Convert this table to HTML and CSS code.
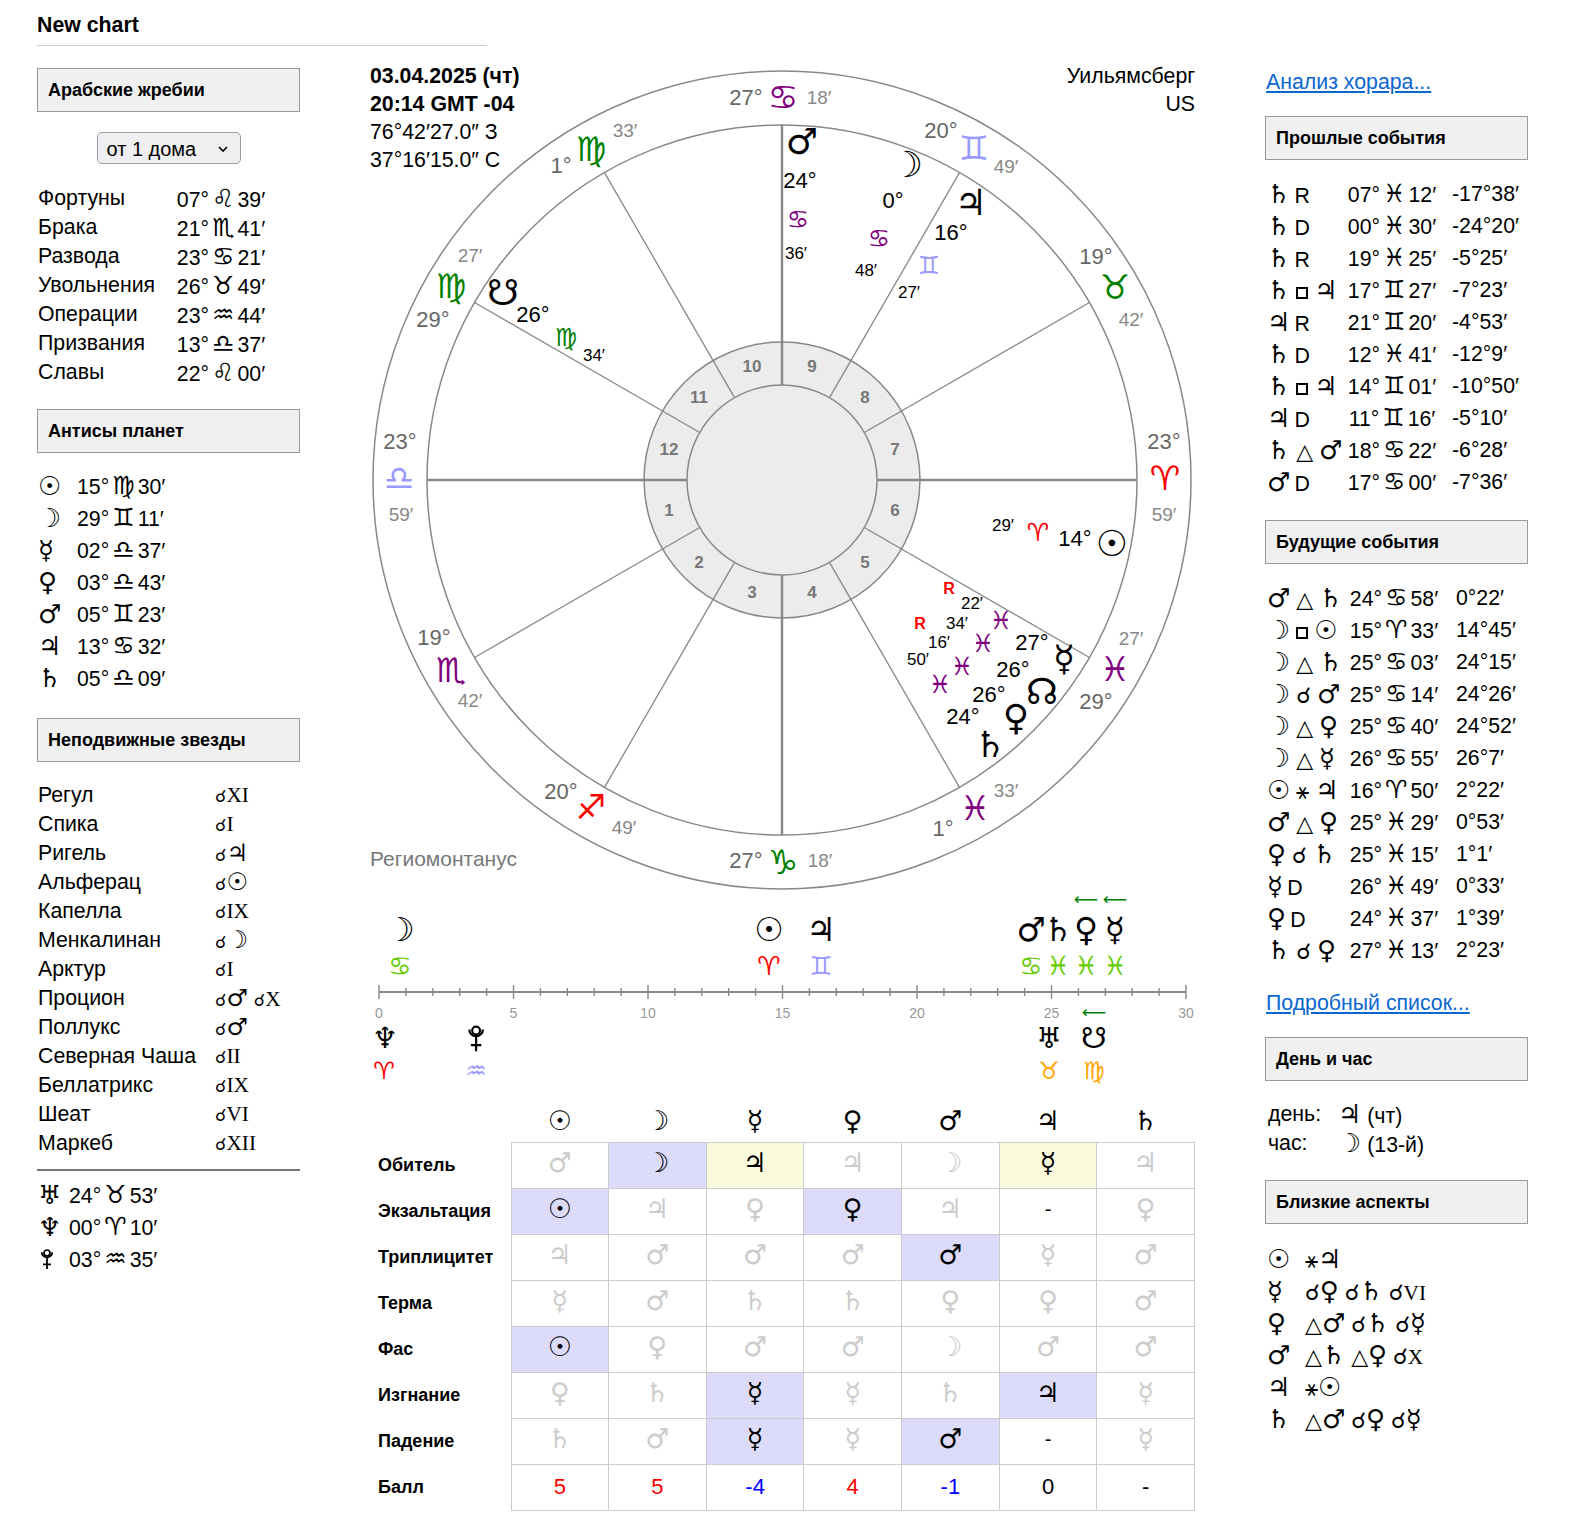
FILE: index.html
```html
<!DOCTYPE html>
<html lang="ru">
<head>
<meta charset="utf-8">
<title>New chart</title>
<link rel="stylesheet" href="styles.css">
</head>
<body>
<div class="page">
  <h1 class="title">New chart</h1>
  <div class="columns">
    <aside class="side left">
      <div class="box first">Арабские жребии</div>
      <div class="select"><span>от 1 дома</span><svg class="chev" width="12" height="8" viewBox="0 0 12 8"><path d="M2 2L6 6L10 2" fill="none" stroke="#000" stroke-width="1.6"/></svg></div>
      <div class="lots">
        <span>Фортуны</span><span class="v">07°<span class="z">♌&#xFE0E;</span>39′</span>
        <span>Брака</span><span class="v">21°<span class="z">♏&#xFE0E;</span>41′</span>
        <span>Развода</span><span class="v">23°<span class="z">♋&#xFE0E;</span>21′</span>
        <span>Увольнения</span><span class="v">26°<span class="z">♉&#xFE0E;</span>49′</span>
        <span>Операции</span><span class="v">23°<span class="z">♒&#xFE0E;</span>44′</span>
        <span>Призвания</span><span class="v">13°<span class="z">♎&#xFE0E;</span>37′</span>
        <span>Славы</span><span class="v">22°<span class="z">♌&#xFE0E;</span>00′</span>
      </div>
      <div class="box gap">Антисы планет</div>
      <div class="antis">
        <span class="g">☉</span><span>15°<span class="z">♍&#xFE0E;</span>30′</span>
        <span class="g">☽</span><span>29°<span class="z">♊&#xFE0E;</span>11′</span>
        <span class="g">☿</span><span>02°<span class="z">♎&#xFE0E;</span>37′</span>
        <span class="g">♀</span><span>03°<span class="z">♎&#xFE0E;</span>43′</span>
        <span class="g">♂</span><span>05°<span class="z">♊&#xFE0E;</span>23′</span>
        <span class="g">♃</span><span>13°<span class="z">♋&#xFE0E;</span>32′</span>
        <span class="g">♄</span><span>05°<span class="z">♎&#xFE0E;</span>09′</span>
      </div>
      <div class="box gap2">Неподвижные звезды</div>
      <div class="stars">
        <span>Регул</span><span><span class="cj">☌</span><span class="rn">XI</span></span>
        <span>Спика</span><span><span class="cj">☌</span><span class="rn">I</span></span>
        <span>Ригель</span><span><span class="cj">☌</span><span class="g">♃</span></span>
        <span>Альферац</span><span><span class="cj">☌</span><span class="g">☉</span></span>
        <span>Капелла</span><span><span class="cj">☌</span><span class="rn">IX</span></span>
        <span>Менкалинан</span><span><span class="cj">☌</span><span class="g">☽</span></span>
        <span>Арктур</span><span><span class="cj">☌</span><span class="rn">I</span></span>
        <span>Процион</span><span><span class="cj">☌</span><span class="g">♂</span> <span class="cj">☌</span><span class="rn">X</span></span>
        <span>Поллукс</span><span><span class="cj">☌</span><span class="g">♂</span></span>
        <span>Северная Чаша</span><span><span class="cj">☌</span><span class="rn">II</span></span>
        <span>Беллатрикс</span><span><span class="cj">☌</span><span class="rn">IX</span></span>
        <span>Шеат</span><span><span class="cj">☌</span><span class="rn">VI</span></span>
        <span>Маркеб</span><span><span class="cj">☌</span><span class="rn">XII</span></span>
      </div>
      <hr class="sep">
      <div class="outer">
        <span class="g">♅</span><span>24°<span class="z">♉&#xFE0E;</span>53′</span>
        <span class="g">♆</span><span>00°<span class="z">♈&#xFE0E;</span>10′</span>
        <span><svg class="pluto" width="14" height="22" viewBox="0 0 14 22"><circle cx="7" cy="5" r="3" fill="none" stroke="#000" stroke-width="1.7"/><path d="M1.8 4.2A5.2 5.2 0 0 0 12.2 4.2M7 9.6V21M3 16.3H11" fill="none" stroke="#000" stroke-width="1.8"/></svg></span><span>03°<span class="z">♒&#xFE0E;</span>35′</span>
      </div>
    </aside>

    <main class="mid">
      <div class="chart">
        <svg class="wheel" viewBox="370 62 825 818" width="825" height="818">
          <circle cx="782" cy="480" r="409" class="ring"/>
          <circle cx="782" cy="480" r="355" class="ring"/>
          <circle cx="782" cy="480" r="138" class="hring"/>
          <path class="cusp" d="M864.3 432.5L1089.4 302.5M829.5 397.7L959.5 172.6M734.5 397.7L604.5 172.6M699.7 432.5L474.6 302.5M699.7 527.5L474.6 657.5M734.5 562.3L604.5 787.4M829.5 562.3L959.5 787.4M864.3 527.5L1089.4 657.5"/>
          <path class="axis" d="M877 480H1137M687 480H427M782 385V125M782 575V835"/>
          <circle cx="782" cy="480" r="95" class="hring"/>
          <g class="hn">
            <text x="752" y="366">10</text><text x="812" y="366">9</text>
            <text x="865" y="397">8</text><text x="895" y="449">7</text>
            <text x="895" y="510">6</text><text x="865" y="562">5</text>
            <text x="812" y="592">4</text><text x="752" y="592">3</text>
            <text x="699" y="562">2</text><text x="669" y="510">1</text>
            <text x="669" y="449">12</text><text x="699" y="397">11</text>
          </g>
          <g class="cusps">
            <text class="cd" x="746" y="97">27°</text><text class="cs water" x="783" y="97">♋&#xFE0E;</text><text class="cm" x="819" y="97">18′</text>
            <text class="cd" x="561" y="165">1°</text><text class="cs earth" x="591" y="149">♍&#xFE0E;</text><text class="cm" x="625" y="130">33′</text>
            <text class="cm" x="470" y="255">27′</text><text class="cs earth" x="451" y="286">♍&#xFE0E;</text><text class="cd" x="433" y="319">29°</text>
            <text class="cd" x="400" y="441">23°</text><text class="cs air" x="399" y="478">♎&#xFE0E;</text><text class="cm" x="401" y="514">59′</text>
            <text class="cd" x="434" y="637">19°</text><text class="cs water" x="451" y="670">♏&#xFE0E;</text><text class="cm" x="470" y="700">42′</text>
            <text class="cd" x="561" y="791">20°</text><text class="cs fire" x="591" y="807">♐&#xFE0E;</text><text class="cm" x="624" y="827">49′</text>
            <text class="cd" x="746" y="860">27°</text><text class="cs earth" x="783" y="862">♑&#xFE0E;</text><text class="cm" x="820" y="860">18′</text>
            <text class="cd" x="943" y="828">1°</text><text class="cs water" x="975" y="808">♓&#xFE0E;</text><text class="cm" x="1006" y="790">33′</text>
            <text class="cd" x="1096" y="701">29°</text><text class="cs water" x="1115" y="669">♓&#xFE0E;</text><text class="cm" x="1131" y="638">27′</text>
            <text class="cd" x="1164" y="441">23°</text><text class="cs fire" x="1165" y="478">♈&#xFE0E;</text><text class="cm" x="1164" y="514">59′</text>
            <text class="cd" x="1096" y="256">19°</text><text class="cs earth" x="1115" y="287">♉&#xFE0E;</text><text class="cm" x="1131" y="319">42′</text>
            <text class="cd" x="941" y="130">20°</text><text class="cs air" x="974" y="148">♊&#xFE0E;</text><text class="cm" x="1006" y="166">49′</text>
          </g>
          <g class="planets">
            <text class="pg" x="802" y="141">♂</text><text class="pd" x="800" y="180">24°</text><text class="ps water" x="798" y="219">♋&#xFE0E;</text><text class="pm" x="796" y="253">36′</text>
            <text class="pg" x="907" y="164">☽</text><text class="pd" x="893" y="200">0°</text><text class="ps water" x="879" y="238">♋&#xFE0E;</text><text class="pm" x="866" y="270">48′</text>
            <text class="pg" x="971" y="202">♃</text><text class="pd" x="951" y="232">16°</text><text class="ps air" x="929" y="265">♊&#xFE0E;</text><text class="pm" x="909" y="292">27′</text>
            <text class="pg" x="503" y="292">☋</text><text class="pd" x="533" y="314">26°</text><text class="ps earth" x="566" y="337">♍&#xFE0E;</text><text class="pm" x="594" y="355">34′</text>
            <text class="pg" x="1112" y="543">☉</text><text class="pd" x="1075" y="538">14°</text><text class="ps fire" x="1038" y="532">♈&#xFE0E;</text><text class="pm" x="1003" y="525">29′</text>
            <text class="pg" x="1064" y="658">☿</text><text class="pd" x="1032" y="642">27°</text><text class="ps water" x="1001" y="620">♓&#xFE0E;</text><text class="pm" x="972" y="603">22′</text><text class="rt" x="949" y="588">R</text>
            <text class="pg" x="1042" y="691">☊</text><text class="pd" x="1013" y="669">26°</text><text class="ps water" x="983" y="643">♓&#xFE0E;</text><text class="pm" x="957" y="623">34′</text>
            <text class="pg" x="1016" y="717">♀</text><text class="pd" x="989" y="694">26°</text><text class="ps water" x="962" y="666">♓&#xFE0E;</text><text class="pm" x="939" y="642">16′</text><text class="rt" x="920" y="623">R</text>
            <text class="pg" x="990" y="744">♄</text><text class="pd" x="963" y="716">24°</text><text class="ps water" x="940" y="684">♓&#xFE0E;</text><text class="pm" x="918" y="659">50′</text>
          </g>
          <text class="house-sys" x="370" y="858">Региомонтанус</text>
        </svg>
        <div class="info">
          <div class="b">03.04.2025 (чт)</div>
          <div class="b">20:14 GMT -04</div>
          <div>76°42′27.0″ З</div>
          <div>37°16′15.0″ С</div>
        </div>
        <div class="place">
          <div>Уильямсберг</div>
          <div>US</div>
        </div>
      </div>

      <svg class="tl" viewBox="370 880 825 210" width="825" height="210">
        <line class="tl-axis" x1="379" y1="992" x2="1186" y2="992"/>
        <path class="tl-ticks" d="M379 985V999M405.9 988V996M432.8 988V996M459.7 988V996M486.6 988V996M513.5 985V999M540.4 988V996M567.3 988V996M594.2 988V996M621.1 988V996M648 985V999M674.9 988V996M701.8 988V996M728.7 988V996M755.6 988V996M782.5 985V999M809.4 988V996M836.3 988V996M863.2 988V996M890.1 988V996M917 985V999M943.9 988V996M970.8 988V996M997.7 988V996M1024.6 988V996M1051.5 985V999M1078.4 988V996M1105.3 988V996M1132.2 988V996M1159.1 988V996M1186 985V999"/>
        <g class="tl-num">
          <text x="379" y="1013">0</text><text x="513.5" y="1013">5</text><text x="648" y="1013">10</text><text x="782.5" y="1013">15</text><text x="917" y="1013">20</text><text x="1051.5" y="1013">25</text><text x="1186" y="1013">30</text>
        </g>
        <g class="tl-pl">
          <text x="400" y="929">☽</text><text x="769" y="929">☉</text><text x="821" y="929">♃</text>
          <text x="1031" y="929">♂</text><text x="1058" y="929">♄</text><text x="1086" y="929">♀</text><text x="1115" y="929">☿</text>
        </g>
        <g class="tl-pl2">
          <text x="385" y="1038">♆</text><text x="1049" y="1038">♅</text><text x="1094" y="1038">☋</text>
        </g>
        <g transform="translate(467 1024) scale(1.3)"><circle cx="7" cy="5" r="3" fill="none" stroke="#000" stroke-width="1.6"/><path d="M1.8 4.2A5.2 5.2 0 0 0 12.2 4.2M7 9.6V21M3 16.3H11" fill="none" stroke="#000" stroke-width="1.7"/></g>
        <g class="tl-sg">
          <text class="tw" x="400" y="966">♋&#xFE0E;</text><text class="fire" x="769" y="966">♈&#xFE0E;</text><text class="air" x="821" y="966">♊&#xFE0E;</text>
          <text class="tw" x="1031" y="966">♋&#xFE0E;</text><text class="tw" x="1058" y="966">♓&#xFE0E;</text><text class="tw" x="1086" y="966">♓&#xFE0E;</text><text class="tw" x="1115" y="966">♓&#xFE0E;</text>
        </g>
        <g class="tl-sg2">
          <text class="fire" x="384" y="1071">♈&#xFE0E;</text><text class="air" x="476" y="1071">♒&#xFE0E;</text><text class="te" x="1049" y="1071">♉&#xFE0E;</text><text class="te" x="1094" y="1071">♍&#xFE0E;</text>
        </g>
        <g class="tl-arr">
          <text x="1086" y="899">⟵</text><text x="1115" y="899">⟵</text><text x="1094" y="1012">⟵</text>
        </g>
      </svg>

      <table class="dign">
        <colgroup><col class="lab"><col><col><col><col><col><col><col></colgroup>
        <thead>
          <tr><th></th><th>☉</th><th>☽</th><th>☿</th><th>♀</th><th>♂</th><th>♃</th><th>♄</th></tr>
        </thead>
        <tbody>
          <tr><th>Обитель</th><td>♂</td><td class="on bl">☽</td><td class="on yl">♃</td><td>♃</td><td>☽</td><td class="on yl">☿</td><td>♃</td></tr>
          <tr><th>Экзальтация</th><td class="on bl">☉</td><td>♃</td><td>♀</td><td class="on bl">♀</td><td>♃</td><td class="on dash">-</td><td>♀</td></tr>
          <tr><th>Триплицитет</th><td>♃</td><td>♂</td><td>♂</td><td>♂</td><td class="on bl">♂</td><td>☿</td><td>♂</td></tr>
          <tr><th>Терма</th><td>☿</td><td>♂</td><td>♄</td><td>♄</td><td>♀</td><td>♀</td><td>♂</td></tr>
          <tr><th>Фас</th><td class="on bl">☉</td><td>♀</td><td>♂</td><td>♂</td><td>☽</td><td>♂</td><td>♂</td></tr>
          <tr><th>Изгнание</th><td>♀</td><td>♄</td><td class="on bl">☿</td><td>☿</td><td>♄</td><td class="on bl">♃</td><td>☿</td></tr>
          <tr><th>Падение</th><td>♄</td><td>♂</td><td class="on bl">☿</td><td>☿</td><td class="on bl">♂</td><td class="on dash">-</td><td>☿</td></tr>
          <tr class="ball"><th>Балл</th><td class="pos">5</td><td class="pos">5</td><td class="neg">-4</td><td class="pos">4</td><td class="neg">-1</td><td class="zero">0</td><td class="zero">-</td></tr>
        </tbody>
      </table>
    </main>

    <aside class="side right">
      <a class="link first-link" href="#">Анализ хорара...</a>
      <div class="box gap">Прошлые события</div>
      <div class="events past">
        <span><span class="g">♄</span>&#8201;R</span><span class="c">07°<span class="z">♓&#xFE0E;</span>12′</span><span>-17°38′</span>
        <span><span class="g">♄</span>&#8201;D</span><span class="c">00°<span class="z">♓&#xFE0E;</span>30′</span><span>-24°20′</span>
        <span><span class="g">♄</span>&#8201;R</span><span class="c">19°<span class="z">♓&#xFE0E;</span>25′</span><span>-5°25′</span>
        <span><span class="g">♄</span> <span class="sq"></span> <span class="g">♃</span></span><span class="c">17°<span class="z">♊&#xFE0E;</span>27′</span><span>-7°23′</span>
        <span><span class="g">♃</span>&#8201;R</span><span class="c">21°<span class="z">♊&#xFE0E;</span>20′</span><span>-4°53′</span>
        <span><span class="g">♄</span>&#8201;D</span><span class="c">12°<span class="z">♓&#xFE0E;</span>41′</span><span>-12°9′</span>
        <span><span class="g">♄</span> <span class="sq"></span> <span class="g">♃</span></span><span class="c">14°<span class="z">♊&#xFE0E;</span>01′</span><span>-10°50′</span>
        <span><span class="g">♃</span>&#8201;D</span><span class="c">11°<span class="z">♊&#xFE0E;</span>16′</span><span>-5°10′</span>
        <span><span class="g">♄</span> <span class="a">△</span> <span class="g">♂</span></span><span class="c">18°<span class="z">♋&#xFE0E;</span>22′</span><span>-6°28′</span>
        <span><span class="g">♂</span>&#8201;D</span><span class="c">17°<span class="z">♋&#xFE0E;</span>00′</span><span>-7°36′</span>
      </div>
      <div class="box gap">Будущие события</div>
      <div class="events future">
        <span><span class="g">♂</span> <span class="a">△</span> <span class="g">♄</span></span><span class="c">24°<span class="z">♋&#xFE0E;</span>58′</span><span>0°22′</span>
        <span><span class="g">☽</span> <span class="sq"></span> <span class="g">☉</span></span><span class="c">15°<span class="z">♈&#xFE0E;</span>33′</span><span>14°45′</span>
        <span><span class="g">☽</span> <span class="a">△</span> <span class="g">♄</span></span><span class="c">25°<span class="z">♋&#xFE0E;</span>03′</span><span>24°15′</span>
        <span><span class="g">☽</span> <span class="a">☌</span> <span class="g">♂</span></span><span class="c">25°<span class="z">♋&#xFE0E;</span>14′</span><span>24°26′</span>
        <span><span class="g">☽</span> <span class="a">△</span> <span class="g">♀</span></span><span class="c">25°<span class="z">♋&#xFE0E;</span>40′</span><span>24°52′</span>
        <span><span class="g">☽</span> <span class="a">△</span> <span class="g">☿</span></span><span class="c">26°<span class="z">♋&#xFE0E;</span>55′</span><span>26°7′</span>
        <span><span class="g">☉</span> <span class="a">⚹</span> <span class="g">♃</span></span><span class="c">16°<span class="z">♈&#xFE0E;</span>50′</span><span>2°22′</span>
        <span><span class="g">♂</span> <span class="a">△</span> <span class="g">♀</span></span><span class="c">25°<span class="z">♓&#xFE0E;</span>29′</span><span>0°53′</span>
        <span><span class="g">♀</span> <span class="a">☌</span> <span class="g">♄</span></span><span class="c">25°<span class="z">♓&#xFE0E;</span>15′</span><span>1°1′</span>
        <span><span class="g">☿</span>&#8201;D</span><span class="c">26°<span class="z">♓&#xFE0E;</span>49′</span><span>0°33′</span>
        <span><span class="g">♀</span>&#8201;D</span><span class="c">24°<span class="z">♓&#xFE0E;</span>37′</span><span>1°39′</span>
        <span><span class="g">♄</span> <span class="a">☌</span> <span class="g">♀</span></span><span class="c">27°<span class="z">♓&#xFE0E;</span>13′</span><span>2°23′</span>
      </div>
      <a class="link more-link" href="#">Подробный список...</a>
      <div class="box gap">День и час</div>
      <div class="dayhour">
        <span>день:</span><span><span class="g">♃</span> (чт)</span>
        <span>час:</span><span><span class="g">☽</span> (13-й)</span>
      </div>
      <div class="box gap">Близкие аспекты</div>
      <div class="close">
        <span class="g">☉</span><span><span class="a">⚹</span><span class="g">♃</span></span>
        <span class="g">☿</span><span><span class="a">☌</span><span class="g">♀</span> <span class="a">☌</span><span class="g">♄</span> <span class="a">☌</span><span class="rn">VI</span></span>
        <span class="g">♀</span><span><span class="a">△</span><span class="g">♂</span> <span class="a">☌</span><span class="g">♄</span> <span class="a">☌</span><span class="g">☿</span></span>
        <span class="g">♂</span><span><span class="a">△</span><span class="g">♄</span> <span class="a">△</span><span class="g">♀</span> <span class="a">☌</span><span class="rn">X</span></span>
        <span class="g">♃</span><span><span class="a">⚹</span><span class="g">☉</span></span>
        <span class="g">♄</span><span><span class="a">△</span><span class="g">♂</span> <span class="a">☌</span><span class="g">♀</span> <span class="a">☌</span><span class="g">☿</span></span>
      </div>
    </aside>
  </div>
</div>
</body>
</html>
```

FILE: styles.css
```css
* { box-sizing: border-box; }
html, body { margin: 0; padding: 0; background: #fff; }
body {
  font-family: "Liberation Sans", Arial, sans-serif;
  font-size: 21.3px;
  color: #000;
}
.page { width: 1570px; padding: 0 37px; }
.title {
  width: 450px;
  margin: 0;
  padding: 12px 0 7px;
  font-size: 21.3px;
  line-height: 26px;
  font-weight: bold;
  border-bottom: 1px solid #ccc;
}
.columns { display: flex; gap: 70px; align-items: flex-start; }
.side { width: 263px; flex: none; }
.mid { width: 825px; flex: none; padding-top: 16px; }

.g { font-family: "DejaVu Sans", sans-serif; font-size: 26px; font-weight: normal; }
.a { font-family: "DejaVu Sans", sans-serif; font-size: 22px; font-weight: normal; }
.z { font-family: "DejaVu Sans", sans-serif; margin: 0 3px; font-size: 25px; }
.rn { font-family: "Liberation Serif", "Times New Roman", serif; font-size: 21.3px; }
.cj { font-family: "DejaVu Sans", sans-serif; font-size: 17px; }

.box {
  height: 44px;
  border: 1px solid #999;
  background: #f0f0f0;
  font-size: 18px;
  font-weight: bold;
  line-height: 42px;
  padding-left: 10px;
}
.box.first { margin-top: 22px; }
.box.gap { margin-top: 22px; }
.box.gap2 { margin-top: 24px; }

.select {
  width: 144px;
  height: 32px;
  margin: 20px auto 0;
  border: 1px solid #9a9aa4;
  border-radius: 5px;
  background: #efeff2;
  display: flex;
  align-items: center;
  justify-content: space-between;
  padding: 2px 11px 0 9px;
  font-size: 20px;
}
.chev { display: block; }

.lots {
  margin-top: 20px;
  display: grid;
  grid-template-columns: 120px 126px;
  grid-auto-rows: 29px;
  line-height: 29px;
  white-space: nowrap;
  padding-left: 1px;
}
.lots .v { text-align: center; }

.antis, .outer {
  display: grid;
  grid-template-columns: 39px auto;
  grid-auto-rows: 32px;
  line-height: 32px;
  white-space: nowrap;
  padding-left: 1px;
}
.antis { margin-top: 17px; }
.outer { margin-top: 8px; grid-template-columns: 31px auto; }
.pluto { vertical-align: -4px; margin-left: 2px; }

.stars {
  margin-top: 19px;
  display: grid;
  grid-template-columns: 177px auto;
  grid-auto-rows: 29px;
  line-height: 29px;
  white-space: nowrap;
  padding-left: 1px;
}
.stars .g { font-size: 24px; }
.sep {
  margin: 11px 0 0;
  border: 0;
  height: 2px;
  background: #777;
}

/* chart */
.chart { position: relative; width: 825px; height: 818px; }
.wheel { display: block; overflow: visible; }
.wheel text, .tl text {
  text-anchor: middle;
  dominant-baseline: central;
  font-family: "Liberation Sans", Arial, sans-serif;
}
.ring { fill: none; stroke: #888; stroke-width: 1.5; }
.hring { fill: #ececec; stroke: #888; stroke-width: 1.5; }
.cusp { stroke: #888; stroke-width: 1.3; fill: none; }
.axis { stroke: #888; stroke-width: 2.4; fill: none; }
.hn text { font-size: 17px; font-weight: bold; fill: #777; }
.cd { font-size: 22px; fill: #666; }
.cm { font-size: 19px; fill: #888; }
.wheel .cs { font-family: "DejaVu Sans", sans-serif; font-size: 34px; }
.wheel .pg { font-family: "DejaVu Sans", sans-serif; font-size: 36px; fill: #000; }
.pd { font-size: 22px; fill: #000; }
.wheel .ps { font-family: "DejaVu Sans", sans-serif; font-size: 25px; }
.pm { font-size: 17px; fill: #000; }
.rt { font-size: 16px; font-weight: bold; fill: #f00; }
.fire { fill: #f00; }
.earth { fill: #008000; }
.air { fill: #9999ff; }
.water { fill: #800080; }
.wheel .house-sys { text-anchor: start; font-size: 21px; fill: #777; }

.info {
  position: absolute;
  top: 0;
  left: 0;
  font-size: 21.3px;
  line-height: 28px;
}
.info .b { font-weight: bold; }
.place {
  position: absolute;
  top: 0;
  right: 0;
  text-align: right;
  font-size: 21.3px;
  line-height: 28px;
}

/* timeline */
.tl { display: block; }
.tl-axis { stroke: #888; stroke-width: 2; }
.tl-ticks { stroke: #888; stroke-width: 1.4; fill: none; }
.tl-num text { font-size: 14px; fill: #999; }
.tl .tl-pl text { font-family: "DejaVu Sans", sans-serif; font-size: 33px; fill: #000; }
.tl .tl-pl2 text { font-family: "DejaVu Sans", sans-serif; font-size: 29px; fill: #000; }
.tl .tl-sg text { font-family: "DejaVu Sans", sans-serif; font-size: 26px; }
.tl .tl-sg2 text { font-family: "DejaVu Sans", sans-serif; font-size: 24px; }
.tl .tw { fill: #66cc00; }
.tl .te { fill: #ffa500; }
.tl .tl-arr text { font-family: "DejaVu Sans", sans-serif; font-size: 17px; fill: #008000; }

/* dignities table */
.dign {
  margin-top: 10px;
  width: 825px;
  border-collapse: collapse;
  table-layout: fixed;
}
.dign col.lab { width: 141px; }
.dign thead th {
  height: 42px;
  padding: 0;
  font-family: "DejaVu Sans", sans-serif;
  font-size: 27px;
  font-weight: normal;
  text-align: center;
}
.dign tbody th {
  height: 46px;
  padding: 0 0 0 8px;
  text-align: left;
  font-size: 18px;
  font-weight: bold;
  white-space: nowrap;
}
.dign td {
  height: 46px;
  padding: 0 0 5px;
  border: 1px solid #ccc;
  text-align: center;
  font-family: "DejaVu Sans", sans-serif;
  font-size: 27px;
  line-height: 30px;
  color: #ccc;
}
.dign td.on { color: #000; }
.dign td.bl { background: #dcdcfa; }
.dign td.yl { background: #fafadc; }
.dign td.dash { font-family: "Liberation Sans", Arial, sans-serif; font-size: 20px; }
.dign .ball td { font-family: "Liberation Sans", Arial, sans-serif; font-size: 22px; padding: 0; }
.dign .ball .pos { color: #f00; }
.dign .ball .neg { color: #00f; }
.dign .ball .zero { color: #000; }

/* right column */
.link {
  display: block;
  color: #0a66d0;
  text-decoration: underline;
  font-size: 21.3px;
  line-height: 24px;
  padding-left: 1px;
}
.first-link { margin-top: 24px; }
.more-link { margin-top: 25px; }

.events {
  margin-top: 18px;
  display: grid;
  grid-auto-rows: 32px;
  line-height: 32px;
  white-space: nowrap;
  padding-left: 2px;
}
.events.past { grid-template-columns: 73px 104px auto; }
.events.future { grid-template-columns: 73px 108px auto; }
.events .c { text-align: center; }
.events .c + span { padding-left: 8px; }
.sq {
  display: inline-block;
  width: 12px;
  height: 12px;
  border: 2.5px solid #000;
  vertical-align: 0;
}

.dayhour {
  margin-top: 19px;
  display: grid;
  grid-template-columns: 70px auto;
  grid-auto-rows: 29px;
  line-height: 29px;
  padding-left: 3px;
}
.close {
  margin-top: 19px;
  display: grid;
  grid-template-columns: 38px auto;
  grid-auto-rows: 32px;
  line-height: 32px;
  white-space: nowrap;
  padding-left: 2px;
}
```
